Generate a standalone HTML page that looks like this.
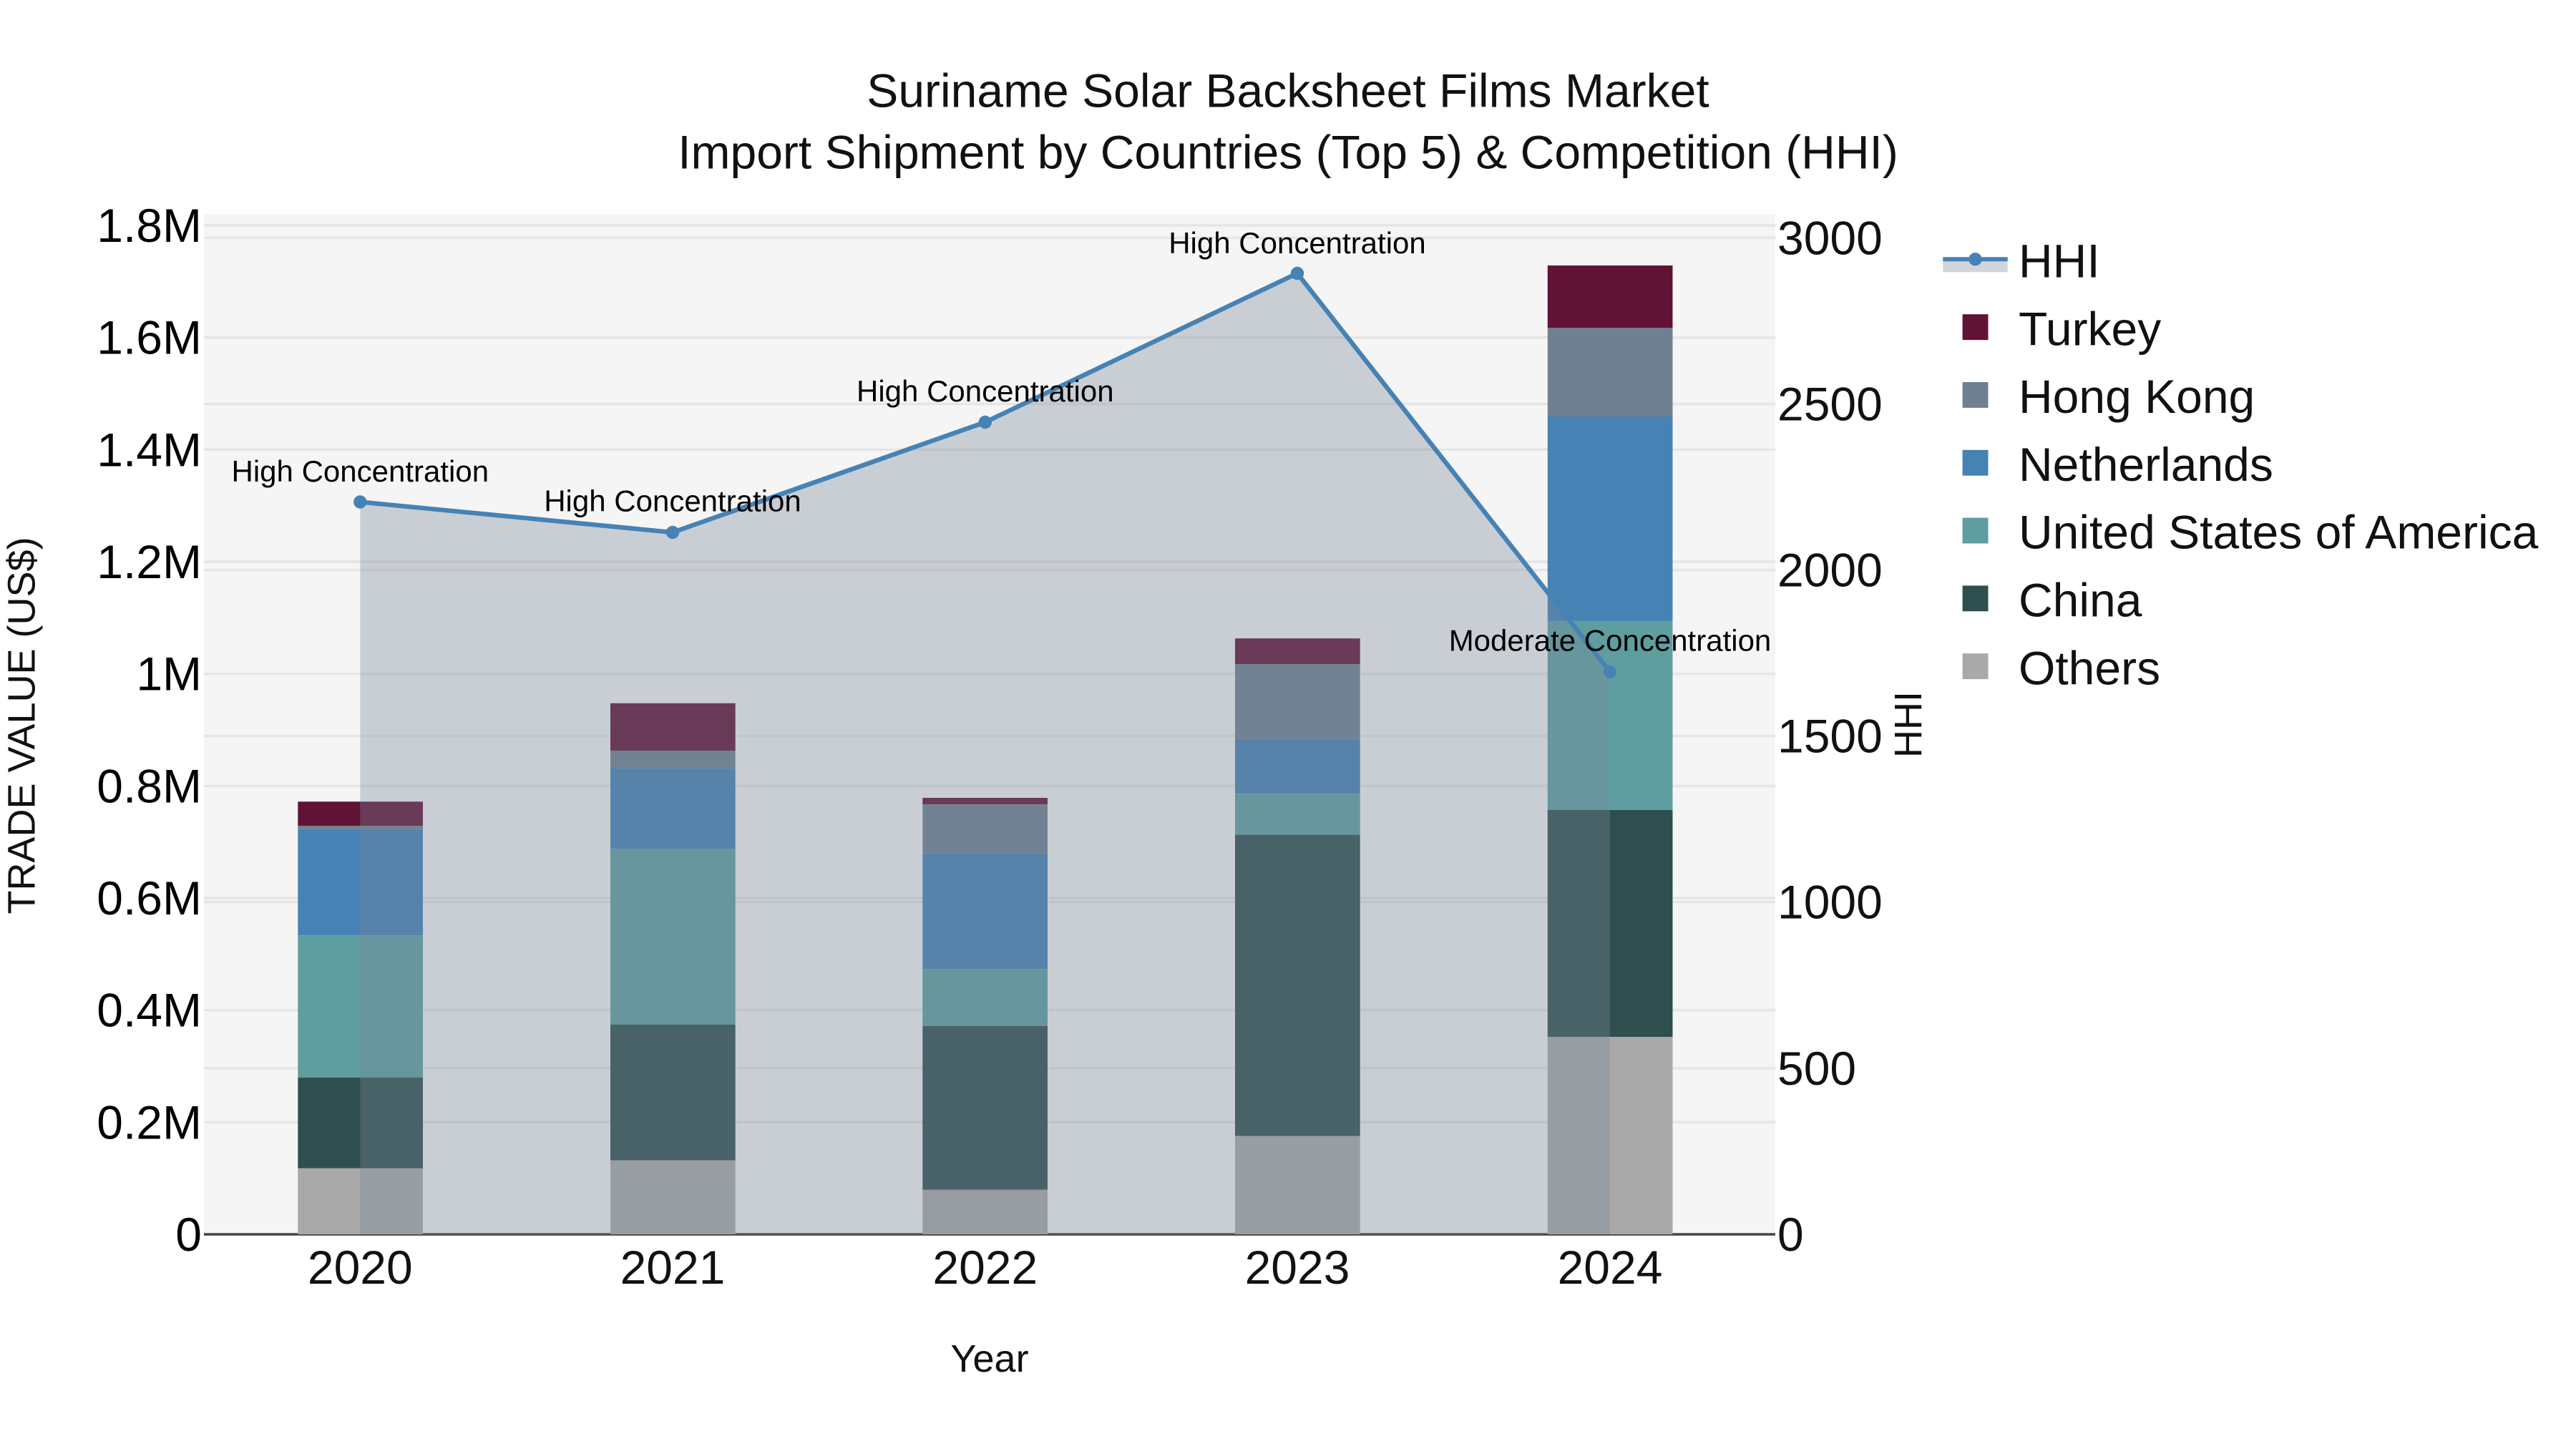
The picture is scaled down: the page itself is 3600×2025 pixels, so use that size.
<!DOCTYPE html>
<html><head><meta charset="utf-8"><style>
html,body{margin:0;padding:0;background:#fff}
svg{display:block}
text{font-family:"Liberation Sans",Arial,sans-serif}
</style></head><body>
<svg width="3600" height="2025" viewBox="0 0 3600 2025" xmlns="http://www.w3.org/2000/svg">
<rect width="3600" height="2025" fill="#fff"/>
<rect x="285" y="299" width="2196" height="1426" fill="#f5f5f5"/>
<g stroke="#e5e5e5" stroke-width="3.4">
<path d="M285 315H2481M285 471.7H2481M285 628.3H2481M285 785H2481M285 941.7H2481M285 1098.3H2481M285 1255H2481M285 1411.7H2481M285 1568.3H2481"/>
<path d="M285 332.3H2481M285 564.4H2481M285 796.5H2481M285 1028.6H2481M285 1260.7H2481M285 1492.9H2481"/>
</g>
<path d="M285 1725H2481" stroke="#444" stroke-width="3.6"/>
<g>
<!-- 2020 -->
<rect x="416.3" y="1120.3" width="174.7" height="34" fill="#611336"/><rect x="416.3" y="1154.3" width="174.7" height="4.5" fill="#708090"/><rect x="416.3" y="1158.8" width="174.7" height="148.4" fill="#4682b4"/><rect x="416.3" y="1307.2" width="174.7" height="198.8" fill="#5f9ea0"/><rect x="416.3" y="1506" width="174.7" height="126.8" fill="#2f4f4f"/><rect x="416.3" y="1632.8" width="174.7" height="92.2" fill="#a9a9a9"/>
<!-- 2021 -->
<rect x="853" y="982.8" width="174.7" height="66.2" fill="#611336"/><rect x="853" y="1049" width="174.7" height="24.2" fill="#708090"/><rect x="853" y="1073.2" width="174.7" height="113.1" fill="#4682b4"/><rect x="853" y="1186.3" width="174.7" height="245.7" fill="#5f9ea0"/><rect x="853" y="1432" width="174.7" height="189.7" fill="#2f4f4f"/><rect x="853" y="1621.7" width="174.7" height="103.3" fill="#a9a9a9"/>
<!-- 2022 -->
<rect x="1289.3" y="1115" width="174.7" height="9.2" fill="#611336"/><rect x="1289.3" y="1124.2" width="174.7" height="68.6" fill="#708090"/><rect x="1289.3" y="1192.8" width="174.7" height="161.5" fill="#4682b4"/><rect x="1289.3" y="1354.3" width="174.7" height="79.7" fill="#5f9ea0"/><rect x="1289.3" y="1434" width="174.7" height="228.8" fill="#2f4f4f"/><rect x="1289.3" y="1662.8" width="174.7" height="62.2" fill="#a9a9a9"/>
<!-- 2023 -->
<rect x="1726" y="892.2" width="174.7" height="35.8" fill="#611336"/><rect x="1726" y="928" width="174.7" height="104.7" fill="#708090"/><rect x="1726" y="1032.7" width="174.7" height="76.5" fill="#4682b4"/><rect x="1726" y="1109.2" width="174.7" height="57.5" fill="#5f9ea0"/><rect x="1726" y="1166.7" width="174.7" height="420.9" fill="#2f4f4f"/><rect x="1726" y="1587.6" width="174.7" height="137.4" fill="#a9a9a9"/>
<!-- 2024 -->
<rect x="2162.8" y="371" width="174.7" height="87" fill="#611336"/><rect x="2162.8" y="458" width="174.7" height="124" fill="#708090"/><rect x="2162.8" y="582" width="174.7" height="285.9" fill="#4682b4"/><rect x="2162.8" y="867.9" width="174.7" height="264.1" fill="#5f9ea0"/><rect x="2162.8" y="1132" width="174.7" height="317" fill="#2f4f4f"/><rect x="2162.8" y="1449" width="174.7" height="276" fill="#a9a9a9"/>
</g>
<path d="M503.3 1725V701.5L940 744L1376.8 590L1813 382L2250 939V1725Z" fill="#778899" fill-opacity=".35"/>
<path d="M503.3 701.5L940 744L1376.8 590L1813 382L2250 939" fill="none" stroke="#4682b4" stroke-width="6.4"/>
<g fill="#4682b4"><circle cx="503.3" cy="701.5" r="9.2"/><circle cx="940" cy="744" r="9.2"/><circle cx="1376.8" cy="590" r="9.2"/><circle cx="1813" cy="382" r="9.2"/><circle cx="2250" cy="939" r="9.2"/></g>
<g font-size="42" text-anchor="middle" fill="#000">
<text x="503.3" y="672.8">High Concentration</text>
<text x="940" y="714.5">High Concentration</text>
<text x="1376.8" y="561">High Concentration</text>
<text x="1813" y="354">High Concentration</text>
<text x="2250" y="909.7">Moderate Concentration</text>
</g>
<g font-size="66" text-anchor="middle" fill="#111">
<text x="1800" y="149.7">Suriname Solar Backsheet Films Market</text>
<text x="1800" y="235.7">Import Shipment by Countries (Top 5) &amp; Competition (HHI)</text>
</g>
<g font-size="66" text-anchor="end" fill="#000">
<text x="282" y="338">1.8M</text>
<text x="282" y="494.7">1.6M</text>
<text x="282" y="651.3">1.4M</text>
<text x="282" y="808">1.2M</text>
<text x="282" y="964.7">1M</text>
<text x="282" y="1121.3">0.8M</text>
<text x="282" y="1278">0.6M</text>
<text x="282" y="1434.7">0.4M</text>
<text x="282" y="1591.3">0.2M</text>
<text x="282" y="1748">0</text>
</g>
<g font-size="66" text-anchor="start" fill="#111">
<text x="2484" y="355.3">3000</text>
<text x="2484" y="587.4">2500</text>
<text x="2484" y="819.5">2000</text>
<text x="2484" y="1051.6">1500</text>
<text x="2484" y="1283.7">1000</text>
<text x="2484" y="1515.9">500</text>
<text x="2484" y="1748">0</text>
</g>
<g font-size="66" text-anchor="middle" fill="#111">
<text x="503.3" y="1794">2020</text>
<text x="940" y="1794">2021</text>
<text x="1376.8" y="1794">2022</text>
<text x="1813" y="1794">2023</text>
<text x="2250" y="1794">2024</text>
</g>
<text x="1383" y="1917" font-size="54" text-anchor="middle" fill="#111">Year</text>
<text transform="translate(48.3 1014) rotate(-90)" font-size="54" text-anchor="middle" fill="#111">TRADE VALUE (US$)</text>
<text transform="translate(2685 1012.5) rotate(-90)" font-size="54" text-anchor="middle" fill="#111">HHI</text>
<!-- legend -->
<rect x="2715.3" y="362.3" width="90.4" height="18" fill="#778899" fill-opacity=".35"/>
<path d="M2715.3 362.3H2805.7" stroke="#4682b4" stroke-width="6"/>
<circle cx="2760.5" cy="362.3" r="9.2" fill="#4682b4"/>
<rect x="2742.6" y="439.2" width="35.9" height="35.9" fill="#611336"/>
<rect x="2742.6" y="534" width="35.9" height="35.9" fill="#708090"/>
<rect x="2742.6" y="628.8" width="35.9" height="35.9" fill="#4682b4"/>
<rect x="2742.6" y="723.6" width="35.9" height="35.9" fill="#5f9ea0"/>
<rect x="2742.6" y="818.4" width="35.9" height="35.9" fill="#2f4f4f"/>
<rect x="2742.6" y="913.2" width="35.9" height="35.9" fill="#a9a9a9"/>
<g font-size="66" fill="#111">
<text x="2821" y="387.5">HHI</text>
<text x="2821" y="482.3">Turkey</text>
<text x="2821" y="577.1">Hong Kong</text>
<text x="2821" y="671.9">Netherlands</text>
<text x="2821" y="766.7">United States of America</text>
<text x="2821" y="861.5">China</text>
<text x="2821" y="956.3">Others</text>
</g>
</svg>
</body></html>
